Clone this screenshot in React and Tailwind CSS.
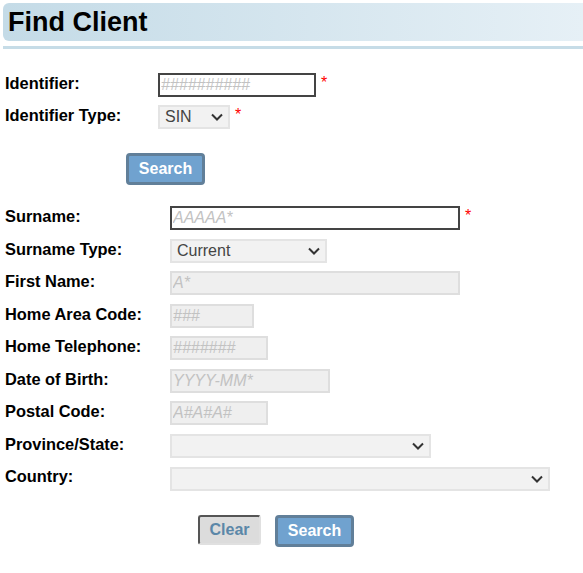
const FONT = { fontFamily: '"Liberation Sans", Arial, sans-serif' };

function Chevron() {
  return (
    <svg
      className="pointer-events-none absolute right-[7px] top-1/2 -translate-y-1/2"
      width="12"
      height="8"
      viewBox="0 0 12 8"
    >
      <path d="M1 1.5l5 5 5-5" fill="none" stroke="#333" strokeWidth="2" />
    </svg>
  );
}

function Star() {
  return <span className="ml-[5px] pt-[2px] text-[16px] leading-none text-[#ff0000]">*</span>;
}

function Select({ width, value }) {
  return (
    <div className={`relative h-[24px] ${width}`}>
      <div className="h-full w-full border-2 border-[#e4e4e4] bg-[#f2f2f2] pl-[5px] text-[16px] leading-[20px] text-[#444]">
        {value}
      </div>
      <Chevron />
    </div>
  );
}

function Field({ width, placeholder, strong }) {
  return (
    <input
      readOnly
      placeholder={placeholder}
      className={`h-[24px] ${width} border-2 px-[1px] text-[16px] outline-none placeholder:italic placeholder:text-[#c2c2c2] ${
        strong ? "border-[#444] bg-white" : "border-[#dedede] bg-[#efefef]"
      }`}
      style={FONT}
    />
  );
}

function Row({ label, labelW, children }) {
  return (
    <div className="flex items-start">
      <div className={`${labelW} shrink-0 pl-[5px] pt-[1px] text-[16.4px] font-bold leading-[18px] text-black`}>
        {label}
      </div>
      <div className="flex items-start">{children}</div>
    </div>
  );
}

function BlueButton({ children }) {
  return (
    <button className="h-[32px] w-[79px] rounded-[4px] border-[3px] border-[#617f99] bg-[#70a2cf] text-[16px] font-bold text-white">
      {children}
    </button>
  );
}

export default function App() {
  return (
    <div className="min-h-screen bg-white" style={FONT}>
      <div className="ml-[3px] mt-[3px] flex h-[38px] items-center rounded-l-[6px] bg-gradient-to-r from-[#c4dbe7] to-[#e6f0f6] pl-[5px]">
        <h1 className="text-[27px] font-bold leading-none text-black">Find Client</h1>
      </div>
      <div className="ml-[3px] mt-[5px] h-[3px] bg-[#c6dce7]" />

      <div className="mt-[24px] flex flex-col gap-[8px]">
        <Row label="Identifier:" labelW="w-[158px]">
          <Field width="w-[158px]" placeholder="##########" strong />
          <Star />
        </Row>
        <Row label="Identifier Type:" labelW="w-[158px]">
          <Select width="w-[72px]" value="SIN" />
          <Star />
        </Row>
      </div>
      <div className="ml-[126px] mt-[24px]">
        <BlueButton>Search</BlueButton>
      </div>

      <div className="mt-[21px] flex flex-col gap-[8.5px]">
        <Row label="Surname:" labelW="w-[170px]">
          <Field width="w-[290px]" placeholder="AAAAA*" strong />
          <Star />
        </Row>
        <Row label="Surname Type:" labelW="w-[170px]">
          <Select width="w-[157px]" value="Current" />
        </Row>
        <Row label="First Name:" labelW="w-[170px]">
          <Field width="w-[290px]" placeholder="A*" />
        </Row>
        <Row label="Home Area Code:" labelW="w-[170px]">
          <Field width="w-[84px]" placeholder="###" />
        </Row>
        <Row label="Home Telephone:" labelW="w-[170px]">
          <Field width="w-[98px]" placeholder="#######" />
        </Row>
        <Row label="Date of Birth:" labelW="w-[170px]">
          <Field width="w-[160px]" placeholder="YYYY-MM*" />
        </Row>
        <Row label="Postal Code:" labelW="w-[170px]">
          <Field width="w-[98px]" placeholder="A#A#A#" />
        </Row>
        <Row label="Province/State:" labelW="w-[170px]">
          <Select width="w-[261px]" value="" />
        </Row>
        <Row label="Country:" labelW="w-[170px]">
          <div className="pt-[1px]">
            <Select width="w-[380px]" value="" />
          </div>
        </Row>
      </div>

      <div className="ml-[198px] mt-[24px] flex items-start gap-[14px]">
        <button className="h-[30px] w-[63px] rounded-[3px] border-2 border-b-[#e0e0e0] border-l-[#555] border-r-[#e0e0e0] border-t-[#555] bg-[#dcdcdc] text-[16px] font-bold text-[#5b87a8]">
          Clear
        </button>
        <BlueButton>Search</BlueButton>
      </div>
    </div>
  );
}
